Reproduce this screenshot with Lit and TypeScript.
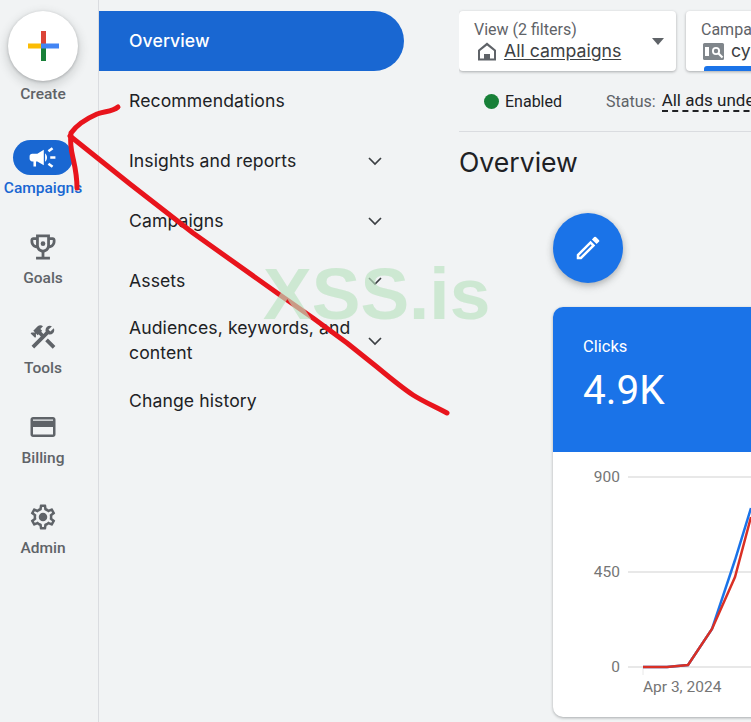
import { LitElement, html, css, svg } from 'lit';
import { customElement } from 'lit/decorators.js';

const ICONS: Record<string, unknown> = {
  campaign: svg`<path d="M18 11v2h4v-2h-4zm-2 6.61c.96.71 2.21 1.65 3.2 2.39.4-.53.8-1.07 1.2-1.6-.99-.74-2.24-1.68-3.2-2.4-.4.54-.8 1.08-1.2 1.61zM20.4 5.6c-.4-.53-.8-1.07-1.2-1.6-.99.74-2.24 1.68-3.2 2.4.4.53.8 1.07 1.2 1.6.96-.72 2.21-1.65 3.2-2.4zM4 9c-1.1 0-2 .9-2 2v2c0 1.1.9 2 2 2h1v4h2v-4h1l5 3V6L8 9H4zm11.5 3c0-1.33-.58-2.53-1.5-3.35v6.69c.92-.81 1.5-2.01 1.5-3.34z"/>`,
  goals: svg`<path d="M19 5h-2V3H7v2H5c-1.1 0-2 .9-2 2v1c0 2.55 1.92 4.63 4.39 4.94.63 1.5 1.98 2.63 3.61 2.96V19H7v2h10v-2h-4v-3.1c1.63-.33 2.98-1.46 3.61-2.96C19.08 12.63 21 10.55 21 8V7c0-1.1-.9-2-2-2zM5 8V7h2v3.82C5.84 10.4 5 9.3 5 8zm7 6c-1.65 0-3-1.35-3-3V5h6v6c0 1.65-1.35 3-3 3zm7-6c0 1.3-.84 2.4-2 2.82V7h2v1z"/><circle cx="12" cy="9.6" r="1.7"/>`,
  tools: svg`<path d="M13.78 15.3l6 6 2.11-2.16-6-6zM17.5 10c1.93 0 3.5-1.57 3.5-3.5 0-.58-.16-1.12-.41-1.6l-2.7 2.7-1.49-1.49 2.7-2.7c-.48-.25-1.02-.41-1.6-.41C15.57 3 14 4.57 14 6.5c0 .41.08.8.21 1.16l-1.85 1.85-1.78-1.78.71-.71-1.41-1.41L12 3.49c-1.17-1.17-3.07-1.17-4.24 0L4.22 7.03l1.41 1.41H2.81l-.71.71 3.54 3.54.71-.71V9.15l1.41 1.41.71-.71 1.78 1.78-7.41 7.41 2.12 2.12L16.34 9.79c.36.13.75.21 1.16.21z"/>`,
  billing: svg`<path d="M20 4H4c-1.11 0-1.99.89-1.99 2L2 18c0 1.11.89 2 2 2h16c1.11 0 2-.89 2-2V6c0-1.11-.89-2-2-2zm0 14H4v-6h16v6zm0-10H4V6h16v2z"/><rect x="4" y="7" width="16" height="5"/>`,
  admin: svg`<path d="M19.43 12.98c.04-.32.07-.64.07-.98 0-.34-.03-.66-.07-.98l2.11-1.65c.19-.15.24-.42.12-.64l-2-3.46c-.09-.16-.26-.25-.44-.25-.06 0-.12.01-.17.03l-2.49 1c-.52-.4-1.08-.73-1.69-.98l-.38-2.65C14.46 2.18 14.25 2 14 2h-4c-.25 0-.46.18-.49.42l-.38 2.65c-.61.25-1.17.59-1.69.98l-2.49-1c-.06-.02-.12-.03-.18-.03-.17 0-.34.09-.43.25l-2 3.46c-.13.22-.07.49.12.64l2.11 1.65c-.04.32-.07.65-.07.98 0 .33.03.66.07.98l-2.11 1.65c-.19.15-.24.42-.12.64l2 3.46c.09.16.26.25.44.25.06 0 .12-.01.17-.03l2.49-1c.52.4 1.08.73 1.69.98l.38 2.65c.03.24.24.42.49.42h4c.25 0 .46-.18.49-.42l.38-2.65c.61-.25 1.17-.59 1.69-.98l2.49 1c.06.02.12.03.18.03.17 0 .34-.09.43-.25l2-3.46c.12-.22.07-.49-.12-.64l-2.11-1.65zm-1.98-1.71c.04.31.05.52.05.73 0 .21-.02.43-.05.73l-.14 1.13.89.7 1.08.84-.7 1.21-1.27-.51-1.04-.42-.9.68c-.43.32-.84.56-1.25.73l-1.06.43-.16 1.13-.2 1.35h-1.4l-.19-1.35-.16-1.13-1.06-.43c-.43-.18-.83-.41-1.23-.71l-.91-.7-1.06.43-1.27.51-.7-1.21 1.08-.84.89-.7-.14-1.13c-.03-.31-.05-.54-.05-.74s.02-.43.05-.73l.14-1.13-.89-.7-1.08-.84.7-1.21 1.27.51 1.04.42.9-.68c.43-.32.84-.56 1.25-.73l1.06-.43.16-1.13.2-1.35h1.39l.19 1.35.16 1.13 1.06.43c.43.18.83.41 1.23.71l.91.7 1.06-.43 1.27-.51.7 1.21-1.07.85-.89.7.14 1.13z"/><circle cx="12" cy="12" r="3.4"/>`,
};

const RAIL = [
  { id: 'goals', label: 'Goals', box: '1.2 1.2 21.6 21.6' },
  { id: 'tools', label: 'Tools', box: '0 0 24 24' },
  { id: 'billing', label: 'Billing', box: '0 0 24 24' },
  { id: 'admin', label: 'Admin', box: '0 0 24 24' },
];

const NAV = [
  { label: 'Overview', active: true },
  { label: 'Recommendations' },
  { label: 'Insights and reports', more: true },
  { label: 'Campaigns', more: true },
  { label: 'Assets', more: true },
  { label: 'Audiences, keywords, and content', more: true },
  { label: 'Change history' },
];

@customElement('app-root')
export class AppRoot extends LitElement {
  static styles = css`
    :host {
      display: flex;
      position: relative;
      width: 751px;
      height: 722px;
      overflow: hidden;
      background: #f1f3f4;
      font-family: Roboto, sans-serif;
      color: #202124;
    }

    .rail {
      flex: none;
      box-sizing: border-box;
      width: 99px;
      border-right: 1px solid #dadce0;
      display: flex;
      flex-direction: column;
      align-items: center;
      padding: 11px 12px 0 0;
    }
    .create {
      flex: none;
      width: 70px;
      height: 70px;
      border-radius: 50%;
      background: #fff;
      box-shadow: 0 1px 3px rgba(60, 64, 67, 0.3), 0 4px 8px 3px rgba(60, 64, 67, 0.15);
      display: flex;
      align-items: center;
      justify-content: center;
    }
    .rail-label {
      font-size: 15.5px;
      font-weight: 500;
      line-height: 20px;
      color: #5f6368;
      text-align: center;
      white-space: nowrap;
    }
    .create-label {
      margin-top: 3px;
      height: 56px;
    }
    .rail-item {
      height: 90px;
      display: flex;
      flex-direction: column;
      align-items: center;
    }
    .rail-item > svg {
      width: 30px;
      height: 30px;
      fill: #5f6368;
      margin-top: 2px;
      margin-bottom: 6px;
    }
    .pill {
      width: 60px;
      height: 35px;
      border-radius: 18px;
      background: #1967d2;
      display: flex;
      align-items: center;
      justify-content: center;
      margin-bottom: 3px;
    }
    .pill svg {
      width: 31px;
      height: 31px;
      fill: #fff;
    }
    .current .rail-label {
      color: #1967d2;
    }

    .nav {
      flex: none;
      width: 360px;
      box-sizing: border-box;
      padding-top: 11px;
    }
    .nav-row {
      width: 305px;
      height: 60px;
      box-sizing: border-box;
      padding: 0 17px 0 30px;
      display: flex;
      align-items: center;
      justify-content: space-between;
      gap: 10px;
      font-family: Inter, sans-serif;
      font-size: 17.6px;
      letter-spacing: 0.1px;
      line-height: 25px;
      border-radius: 0 30px 30px 0;
    }
    .nav-row span {
      margin-top: -2px;
    }
    .nav-row.active {
      background: #1967d2;
      color: #fff;
      font-weight: 500;
    }
    .chev {
      flex: none;
      width: 24px;
      height: 24px;
      fill: none;
      stroke: #3c4043;
      stroke-width: 1.7;
    }

    .main {
      flex: 1;
      min-width: 0;
      overflow: hidden;
      padding-top: 11px;
    }
    .filters {
      display: flex;
      gap: 10px;
      width: 600px;
    }
    .filter {
      flex: none;
      position: relative;
      box-sizing: border-box;
      width: 217px;
      height: 60px;
      background: #fff;
      border-radius: 4px;
      box-shadow: 0 1px 3px rgba(60, 64, 67, 0.4);
      padding: 10px 15px;
      overflow: hidden;
    }
    .filter-title {
      font-size: 16px;
      line-height: 18px;
      color: #5f6368;
    }
    .filter-value {
      display: flex;
      align-items: center;
      gap: 6px;
      margin-top: -1px;
      font-size: 17.7px;
      line-height: 26px;
      color: #3c4043;
      font-family: Inter, sans-serif;
      white-space: nowrap;
    }
    .filter-value u {
      text-underline-offset: 2px;
    }
    .filter-value svg {
      width: 24px;
      height: 24px;
      flex: none;
      fill: #5f6368;
    }
    .caret {
      position: absolute;
      right: 12px;
      top: 27px;
      width: 0;
      height: 0;
      border-left: 6.5px solid transparent;
      border-right: 6.5px solid transparent;
      border-top: 7px solid #5f6368;
    }
    .progress {
      position: absolute;
      left: 18px;
      bottom: 0;
      width: 200px;
      height: 5px;
      border-radius: 3px 3px 0 0;
      background: #1a73e8;
    }
    .status {
      display: flex;
      align-items: center;
      height: 61px;
      border-bottom: 1px solid #dadce0;
      box-sizing: border-box;
      padding-left: 25px;
      font-size: 16px;
      white-space: nowrap;
      width: 600px;
    }
    .dot {
      width: 15px;
      height: 15px;
      border-radius: 50%;
      background: #188038;
      margin-right: 6px;
    }
    .status-key {
      margin-left: 44px;
      color: #5f6368;
    }
    .status-val {
      margin-left: 6px;
      font-size: 17px;
      border-bottom: 2px dashed #202124;
      line-height: 20px;
    }
    h1 {
      margin: 15px 0 0;
      font-family: Inter, sans-serif;
      font-size: 26.6px;
      font-weight: 400;
      line-height: 30px;
      color: #202124;
    }
    .fab {
      margin: 36px 0 0 94px;
      width: 70px;
      height: 70px;
      border-radius: 50%;
      background: #1a73e8;
      box-shadow: 0 2px 6px rgba(60, 64, 67, 0.3), 0 4px 10px rgba(60, 64, 67, 0.12);
      display: flex;
      align-items: center;
      justify-content: center;
    }
    .fab svg {
      width: 30px;
      height: 30px;
      fill: #fff;
    }
    .card {
      margin: 24px 0 0 94px;
      width: 500px;
      height: 410px;
      background: #fff;
      border-radius: 10px;
      box-shadow: 0 1px 3px rgba(60, 64, 67, 0.4);
      overflow: hidden;
    }
    .card-head {
      height: 145px;
      box-sizing: border-box;
      padding: 31px 30px 0;
      background: #1a73e8;
      color: #fff;
    }
    .card-title {
      font-size: 16.5px;
      line-height: 18px;
    }
    .card-num {
      margin-top: 10px;
      font-size: 40.5px;
      line-height: 48px;
    }
    .chart {
      display: block;
      width: 500px;
      height: 265px;
    }
    .chart text {
      font-family: Roboto, sans-serif;
      font-size: 15.5px;
      fill: #757575;
    }

    .ink {
      position: absolute;
      left: 0;
      top: 0;
      pointer-events: none;
    }
    .ink path {
      fill: none;
      stroke: #e8141c;
      stroke-width: 5;
      stroke-linecap: round;
      stroke-linejoin: round;
    }
    .watermark {
      position: absolute;
      left: 263px;
      top: 253px;
      font-family: 'Liberation Sans', sans-serif;
      font-size: 73px;
      font-weight: 700;
      line-height: 82px;
      color: rgba(186, 226, 192, 0.65);
      pointer-events: none;
    }
  `;

  render() {
    return html`
      <aside class="rail">
        <div class="create">
          <svg width="31" height="30" viewBox="0 0 31 30">
            <rect x="0" y="12.5" width="14" height="5" fill="#fbbc04"></rect>
            <rect x="13" y="0" width="5" height="15" fill="#db4437"></rect>
            <rect x="13" y="15" width="5" height="15" fill="#188038"></rect>
            <rect x="13" y="12.5" width="18" height="5" fill="#4285f4"></rect>
          </svg>
        </div>
        <div class="rail-label create-label">Create</div>
        <div class="rail-item current">
          <div class="pill"><svg viewBox="0 0 24 24">${ICONS.campaign}</svg></div>
          <div class="rail-label">Campaigns</div>
        </div>
        ${RAIL.map(
          (r) => html`
            <div class="rail-item">
              <svg viewBox=${r.box}>${ICONS[r.id]}</svg>
              <div class="rail-label">${r.label}</div>
            </div>
          `
        )}
      </aside>

      <nav class="nav">
        ${NAV.map(
          (n) => html`
            <div class="nav-row ${n.active ? 'active' : ''}">
              <span>${n.label}</span>
              ${n.more
                ? html`<svg class="chev" viewBox="0 0 24 24"><path d="M6 9l6 6 6-6"></path></svg>`
                : ''}
            </div>
          `
        )}
      </nav>

      <section class="main">
        <div class="filters">
          <div class="filter">
            <div class="filter-title">View (2 filters)</div>
            <div class="filter-value">
              <svg viewBox="0 0 24 24"><path fill-rule="evenodd" d="M13 3.5L4 11v10.5h18V11L13 3.5zM13 6.5l7 5.5v7.5H6V12l7-5.5z"></path><rect x="10" y="15" width="6" height="5"></rect></svg>
              <u>All campaigns</u>
            </div>
            <span class="caret"></span>
          </div>
          <div class="filter">
            <div class="filter-title">Campaigns (1)</div>
            <div class="filter-value">
              <svg viewBox="0 0 24 24"><rect x="2" y="4" width="21" height="17" rx="1.5" fill="#80868b"></rect><rect x="4" y="8" width="4" height="9" fill="#fff"></rect><circle cx="15" cy="12" r="4" fill="#fff"></circle><circle cx="15" cy="12" r="2.2" fill="#80868b"></circle><path d="M17.5 14.5l4 4" stroke="#fff" stroke-width="2.2"></path></svg>
              <span>cyber</span>
            </div>
            <span class="progress"></span>
          </div>
        </div>
        <div class="status">
          <span class="dot"></span>
          <span>Enabled</span>
          <span class="status-key">Status:</span>
          <span class="status-val">All ads under this view</span>
        </div>
        <h1>Overview</h1>
        <div class="fab">
          <svg viewBox="0 0 24 24"><path d="M3 17.25V21h3.75L17.81 9.94l-3.75-3.75L3 17.25zM5.92 19H5v-.92l9.06-9.06.92.92L5.92 19zM20.71 7.04a1 1 0 0 0 0-1.41l-2.34-2.34a1 1 0 0 0-1.41 0l-1.83 1.83 3.75 3.75 1.83-1.83z"></path></svg>
        </div>
        <div class="card">
          <div class="card-head">
            <div class="card-title">Clicks</div>
            <div class="card-num">4.9K</div>
          </div>
          <svg class="chart" viewBox="0 0 500 265">
            <line x1="75" y1="25" x2="500" y2="25" stroke="#e8e8e8" stroke-width="2"></line>
            <line x1="75" y1="120" x2="500" y2="120" stroke="#e8e8e8" stroke-width="2"></line>
            <line x1="75" y1="215" x2="500" y2="215" stroke="#e8e8e8" stroke-width="2"></line>
            <line x1="90" y1="215" x2="90" y2="223" stroke="#e8e8e8" stroke-width="1"></line>
            <text x="67" y="30" text-anchor="end">900</text>
            <text x="67" y="125" text-anchor="end">450</text>
            <text x="67" y="220" text-anchor="end">0</text>
            <text x="90" y="240">Apr 3, 2024</text>
            <path d="M90 215L114 215L135 213L159 177L182 108L198 56" fill="none" stroke="#1a73e8" stroke-width="2.5"></path>
            <path d="M90 215L114 215L135 213L159 177L182 125L198 65" fill="none" stroke="#d93025" stroke-width="2.5"></path>
          </svg>
        </div>
      </section>

      <svg class="ink" width="751" height="722" viewBox="0 0 751 722">
        <path d="M118 107C112 112 105 111 97 114C88 118 78 123 71 133C70 142 71 150 73 158C75 167 77 175 77 188"></path>
        <path d="M70 136L130 184L193 233L280 295L313 318L347 343L377 367C389 377 401 387 413 395C424 402 436 407 447 413"></path>
      </svg>
      <div class="watermark">XSS.is</div>
    `;
  }
}
